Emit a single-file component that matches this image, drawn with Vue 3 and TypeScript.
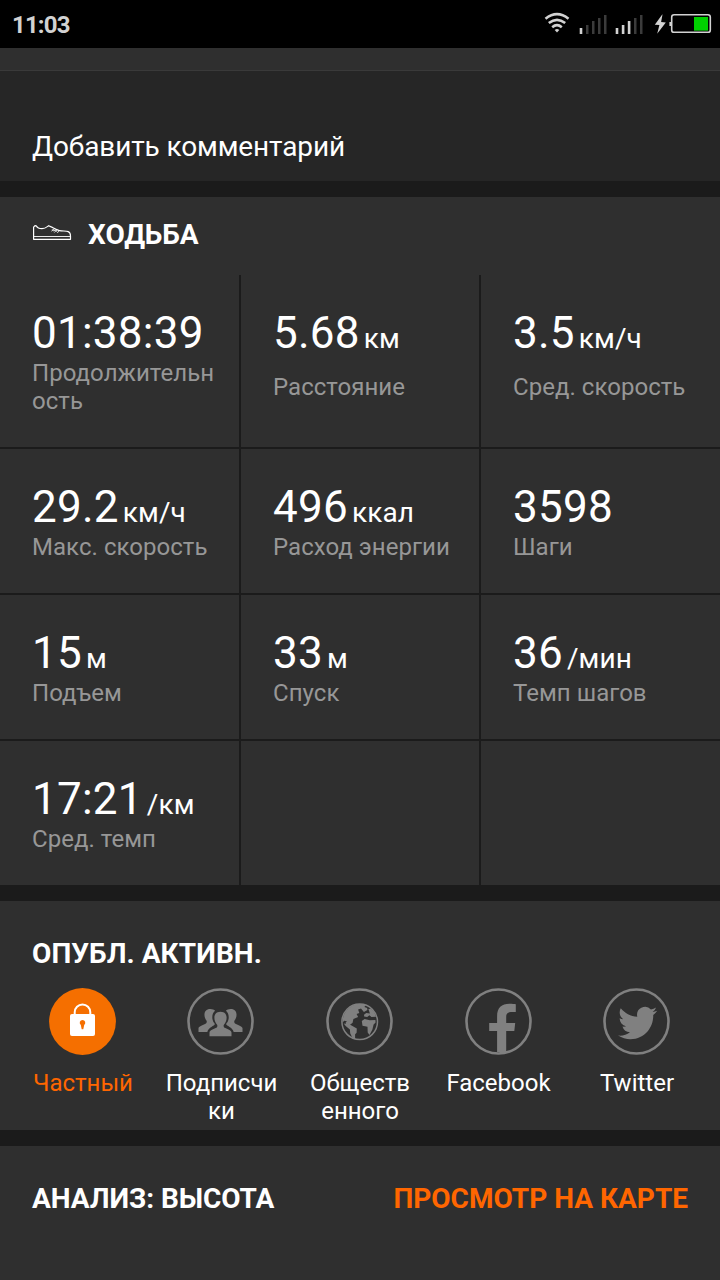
<script setup lang="ts">
interface Metric {
  value: string
  unit?: string
  label: string
}

interface ShareOption {
  id: 'private' | 'followers' | 'public' | 'facebook' | 'twitter'
  label: string
}

const metrics: Metric[] = [
  { value: '01:38:39', label: 'Продолжительн\nость' },
  { value: '5.68', unit: 'км', label: 'Расстояние' },
  { value: '3.5', unit: 'км/ч', label: 'Сред. скорость' },
  { value: '29.2', unit: 'км/ч', label: 'Макс. скорость' },
  { value: '496', unit: 'ккал', label: 'Расход энергии' },
  { value: '3598', label: 'Шаги' },
  { value: '15', unit: 'м', label: 'Подъем' },
  { value: '33', unit: 'м', label: 'Спуск' },
  { value: '36', unit: '/мин', label: 'Темп шагов' },
  { value: '17:21', unit: '/км', label: 'Сред. темп' },
  { value: '', label: '' },
  { value: '', label: '' },
]

const shareOptions: ShareOption[] = [
  { id: 'private', label: 'Частный' },
  { id: 'followers', label: 'Подписчи\nки' },
  { id: 'public', label: 'Обществ\nенного' },
  { id: 'facebook', label: 'Facebook' },
  { id: 'twitter', label: 'Twitter' },
]

const selected: ShareOption['id'] = 'private'
</script>

<template>
  <div class="screen">
    <header class="status">
      <span class="clock">11:03</span>
      <svg class="status-icons" width="170" height="48" viewBox="0 0 170 48">
        <g fill="none" stroke="#d2d2d2" stroke-width="2.6">
          <path d="M-4.5 18.7Q7 9.7 18.5 18.7" />
          <path d="M-1.2 23Q7 16.6 15.2 23" />
          <path d="M2.2 27.2Q7 23.2 11.8 27.2" />
        </g>
        <path d="M7 32.6l-2.3-2.7q2.3-1.6 4.6 0z" fill="#d2d2d2" />
        <g fill="#3b3b3b">
          <rect x="36" y="25" width="2.5" height="9" />
          <rect x="42" y="21" width="2.5" height="13" />
          <rect x="48" y="18" width="2.5" height="16" />
          <rect x="54" y="15" width="2.5" height="19" />
          <rect x="84" y="18" width="2.5" height="16" />
          <rect x="90" y="15" width="2.5" height="19" />
        </g>
        <g fill="#d2d2d2">
          <rect x="29.7" y="28" width="2.6" height="6" />
          <rect x="65.7" y="28" width="2.6" height="6" />
          <rect x="71.8" y="25" width="2.6" height="9" />
          <rect x="77.8" y="21" width="2.6" height="13" />
          <path d="M112.2 14.5l-7.4 10.3 4.6.2-2.2 8.7 8.6-11.2-4.7-.6 1.4-7.4z" />
          <rect x="119.4" y="22" width="2" height="4" />
        </g>
        <rect x="121.7" y="14.7" width="38.6" height="17.6" rx="2.4" fill="none" stroke="#d2d2d2" stroke-width="1.6" />
        <rect x="144" y="17" width="14" height="14" fill="#00d000" />
        <rect x="144" y="30" width="14" height="1" fill="#078807" />
      </svg>
    </header>

    <div class="strip"></div>
    <section class="comment">Добавить комментарий</section>

    <section class="activity">
      <h2 class="activity-title">
        <svg width="40" height="18" viewBox="0 0 40 18" fill="none" stroke="#fff" stroke-width="1.2" stroke-linejoin="round">
          <path d="M1.6 15.3V3.2L3 1.6l1.2.2C5.3 4 7.5 4.7 10 4.7c3.2 0 4.6-1.5 6.7-3l3 1.4c2.7 1.5 5 3 7.8 3.5 3.2.6 6.5.2 8.7 1 2 .8 2.3 2.3 2.3 4.4v3.3z" />
          <path d="M1.6 12.5h36.9" stroke-width=".9" />
          <path d="M23 4.4l-3.6 2.8M25.2 5.4l-2.8 3.1M27.3 6.3L25.3 9M20.2 5.3l1 1.6 2.5-.7 1 1.5" stroke-width=".8" />
        </svg>
        <span>ХОДЬБА</span>
      </h2>
      <div class="metrics">
        <div v-for="(m, i) in metrics" :key="i" class="metric">
          <template v-if="m.value">
            <div class="value">{{ m.value }}<span v-if="m.unit" class="unit">{{ m.unit }}</span></div>
            <div class="label">{{ m.label }}</div>
          </template>
        </div>
      </div>
    </section>

    <section class="share">
      <h2 class="heading">ОПУБЛ. АКТИВН.</h2>
      <div class="options">
        <div v-for="o in shareOptions" :key="o.id" class="option" :class="{ active: o.id === selected }">
          <svg class="badge" width="67" height="67" viewBox="0.5 0.5 67 67">
            <circle v-if="o.id === selected" cx="34" cy="34" r="33.4" fill="#f56f00" />
            <circle v-else cx="34" cy="34" r="32" fill="none" stroke="#808080" stroke-width="2.6" />
            <g v-if="o.id === 'private'">
              <path d="M26.2 28v-3.2a7.8 7.8 0 0 1 15.6 0V28" fill="none" stroke="#fff" stroke-width="2" />
              <rect x="21.5" y="26.5" width="25" height="22" rx="2" fill="#fff" />
              <path d="M34 32.4a2.8 2.8 0 0 1 1.7 5l-.9 4.3h-1.6l-.9-4.3a2.8 2.8 0 0 1 1.7-5z" fill="#f56f00" />
            </g>
            <g v-else-if="o.id === 'followers'" fill="#808080">
              <path d="M12 44.5v-3.7c0-1.5 3-2.6 6-4.1 2-1 2.6-2 2.1-3.5-3.4-4.2-3.2-11.8 3.8-11.8 2 0 3.7.7 4.7 1.9-2.6 2.2-3.4 5.8-2.4 9.2.4 1.8 1.3 2.9 2.2 3.9-.4 2-6.3 3-7.6 8.1z" />
              <path d="M56 44.5v-3.7c0-1.5-3-2.6-6-4.1-2-1-2.6-2-2.1-3.5 3.4-4.2 3.2-11.8-3.8-11.8-2 0-3.7.7-4.7 1.9 2.6 2.2 3.4 5.8 2.4 9.2-.4 1.8-1.3 2.9-2.2 3.9.4 2 6.3 3 7.6 8.1z" />
              <path d="M23 48.7v-3.5c0-2.2 3.4-3.2 6.2-4.6 1.7-.9 2-2 1.4-3.3-3.8-4.2-4.4-13.1 3.4-13.1s7.2 8.9 3.4 13.1c-.6 1.3-.3 2.4 1.4 3.3 2.8 1.4 6.2 2.4 6.2 4.6v3.5z" />
            </g>
            <g v-else-if="o.id === 'public'" fill="#808080">
              <circle cx="34.2" cy="34.3" r="17.8" fill="none" stroke="#808080" stroke-width="1.5" />
              <path d="M17 35.2c-.3-7 3.8-14.5 11.2-17.5 3.2-1.4 8.8-1.7 12 0l-1.3 1.9 2.7.8.3 2.2-3.5 1.9-2.9-3.4-2.9.9 1.2 3.5-2.7.9 1.5 3.1-4.7 2.1-.8 3.6-4.1 3.3-2.3-1.1-.6-2.2 1.3-1.5-2.8-.5z" />
              <path d="M18.2 36l6.1.9 7 4-.2 4.3-1.5 1.5v5l-2.3-.4-2.6-5.6-.3-3.8-4.2-3.3z" />
              <path d="M38.5 27.3l2.3-1.9 3.6.6-1.5-4.5 2.6-.3c2.4 1.7 4.2 4.3 5 8.1l-4.6.2-2-1.8-2.2 1.9-3-.5z" />
              <path d="M36.3 33.5l2.8-2.1 5.2 1.3 5.6-.2.2 2.6-2 2-1.2 4.9-2.9 5.5-1.8-2.4-.2-5.9-5-1z" />
            </g>
            <path
              v-else-if="o.id === 'facebook'"
              d="M32.6 64.6V43.5H24.7v-8h7.9v-6.7c0-8.8 4.5-12.6 12.4-12.6 2.6 0 4.9.3 6.3.5v7.9h-4.9c-3.7 0-4.7 1.6-4.7 4.8v6.1h9l-.9 8h-8.1v21.1z"
              fill="#808080"
            />
            <path
              v-else
              transform="translate(15.6 15.6) scale(1.63 1.66)"
              d="M23.954 4.569a10 10 0 0 1-2.825.775 4.958 4.958 0 0 0 2.163-2.723c-.951.555-2.005.959-3.127 1.184a4.92 4.92 0 0 0-8.384 4.482C7.691 8.094 4.066 6.13 1.64 3.161a4.822 4.822 0 0 0-.666 2.475c0 1.71.87 3.213 2.188 4.096a4.904 4.904 0 0 1-2.228-.616v.061a4.923 4.923 0 0 0 3.946 4.827 4.996 4.996 0 0 1-2.212.085 4.937 4.937 0 0 0 4.604 3.417 9.868 9.868 0 0 1-6.102 2.105c-.39 0-.779-.023-1.17-.067a13.995 13.995 0 0 0 7.557 2.209c9.054 0 13.999-7.496 13.999-13.986 0-.209 0-.42-.015-.63a9.936 9.936 0 0 0 2.46-2.548z"
              fill="#808080"
            />
          </svg>
          <div class="option-label">{{ o.label }}</div>
        </div>
      </div>
    </section>

    <section class="analysis">
      <h2 class="heading">АНАЛИЗ: ВЫСОТА</h2>
      <span class="heading link">ПРОСМОТР НА КАРТЕ</span>
    </section>
  </div>
</template>

<style>
body {
  margin: 0;
  background: #1b1b1b;
}
</style>

<style scoped>
.screen {
  width: 720px;
  height: 1280px;
  overflow: hidden;
  display: flex;
  flex-direction: column;
  background: #1b1b1b;
  color: #fff;
  font-family: Roboto, "Noto Sans", sans-serif;
}
.screen > * {
  flex-shrink: 0;
  box-sizing: border-box;
}
h2 {
  margin: 0;
}
.status {
  height: 48px;
  background: #000;
  display: flex;
  align-items: center;
  justify-content: space-between;
  padding-left: 12px;
}
.clock {
  font-size: 24px;
  font-weight: 700;
  line-height: 28px;
  letter-spacing: -0.85px;
  color: #d2d2d2;
  padding-top: 2px;
}
.status-icons {
  overflow: visible;
}
.strip {
  height: 23px;
  background: #2f2f2f;
  border-bottom: 1px solid #3a3a3a;
}
.comment {
  height: 110px;
  padding: 59px 32px 0;
  background: #262626;
  font-size: 28px;
  line-height: 33px;
  letter-spacing: -0.12px;
}
.activity {
  margin-top: 16px;
  height: 688px;
  background: #2f2f2f;
}
.activity-title {
  height: 78px;
  box-sizing: border-box;
  display: flex;
  align-items: flex-start;
  gap: 16px;
  padding: 21px 0 0 32px;
  font-size: 28px;
  line-height: 33px;
  font-weight: 700;
}
.activity-title svg {
  margin-top: 6px;
}
.metrics {
  display: grid;
  grid-template-columns: 239px 238px 239px;
  grid-template-rows: 172px 144px 144px 144px;
  gap: 2px;
  width: 720px;
  background: #1b1b1b;
}
.metric {
  box-sizing: border-box;
  display: flex;
  flex-direction: column;
  padding: 32px 0 32px 32px;
  background: #2f2f2f;
}
.metric:nth-child(3n) {
  margin-right: -1px;
}
.value {
  height: 52px;
  font-size: 44px;
  line-height: 52px;
  letter-spacing: 0.25px;
  white-space: nowrap;
}
.unit {
  margin-left: 4px;
  font-size: 28px;
  letter-spacing: 0.1px;
}
.label {
  flex: 1;
  display: flex;
  align-items: center;
  font-size: 24px;
  line-height: 28px;
  letter-spacing: 0.04px;
  white-space: pre;
  color: #979797;
}
.share {
  margin-top: 16px;
  height: 229px;
  padding: 36px 14px 0;
  background: #2f2f2f;
}
.heading {
  font-size: 28px;
  line-height: 33px;
  font-weight: 700;
  white-space: nowrap;
}
.share .heading {
  padding-left: 18px;
  letter-spacing: 0.08px;
}
.analysis .heading {
  letter-spacing: -0.06px;
}
.analysis .link {
  letter-spacing: 0;
}
.options {
  display: grid;
  grid-template-columns: 138px 139px 138px 139px 138px;
  margin-top: 18px;
}
.option {
  display: flex;
  flex-direction: column;
  align-items: center;
}
.badge {
  margin-right: 1px;
}
.option:nth-child(2) .badge,
.option:nth-child(5) .badge {
  margin-right: 2px;
}
.option-label {
  margin-top: 14px;
  font-size: 24px;
  line-height: 28px;
  text-align: center;
  white-space: pre;
}
.active .option-label,
.link {
  color: #ff6600;
}
.analysis {
  margin-top: 16px;
  height: 134px;
  padding: 36px 32px 0;
  display: flex;
  justify-content: space-between;
  background: #2f2f2f;
}
</style>
